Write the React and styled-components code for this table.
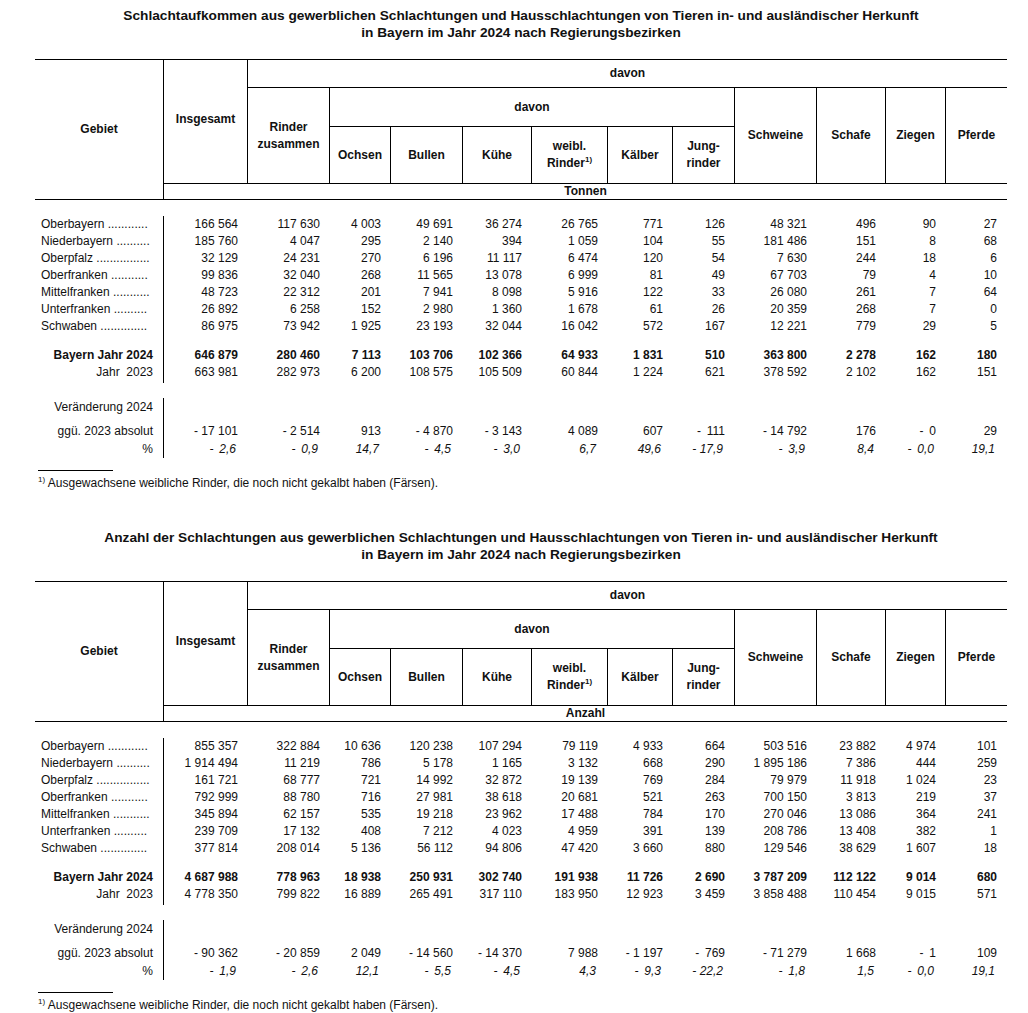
import React from "react";
import styled, { createGlobalStyle } from "styled-components";

const COLS = "129px 84px 82px 61px 72px 69px 76px 65px 62px 82px 69px 60px 61px";

const GlobalStyle = createGlobalStyle`
  html, body { margin: 0; padding: 0; background: #fff; overflow: hidden; }
  body {
    font-family: "Liberation Sans", Arial, sans-serif;
    color: #111;
    font-size: 12px;
  }
`;

const Page = styled.main`
  width: 972px;
  margin-left: 35px;
`;

const Section = styled.section`
  padding-top: 7px;
  margin-bottom: ${(p) => (p.$last ? 0 : 32)}px;
`;

const Title = styled.h2`
  margin: 0 0 18px;
  font-size: 13.7px;
  line-height: 17px;
  font-weight: 700;
  text-align: center;
`;

const HeadGrid = styled.div`
  display: grid;
  grid-template-columns: ${COLS};
  grid-template-rows: 28px 39px 57px 15px;
  border-top: 1px solid #000;
  border-bottom: 1px solid #000;
`;

const HeadCell = styled.div`
  grid-column: ${(p) => p.$col};
  grid-row: ${(p) => p.$row};
  display: flex;
  align-items: center;
  justify-content: center;
  text-align: center;
  font-weight: 700;
  font-size: 12px;
  line-height: 17px;
  padding-bottom: ${(p) => p.$pb || 0}px;
  border-right: ${(p) => (p.$br ? "1px solid #000" : "none")};
  border-bottom: ${(p) => (p.$bb ? "1px solid #000" : "none")};
`;

const Sup = styled.sup`
  font-size: 8px;
  line-height: 0;
  vertical-align: baseline;
  position: relative;
  top: -0.6em;
`;

const Row = styled.div`
  display: grid;
  grid-template-columns: ${COLS};
  height: ${(p) => p.$h}px;
  line-height: ${(p) => p.$h}px;
  font-weight: ${(p) => (p.$bold ? 700 : 400)};
`;

const Label = styled.div`
  border-right: ${(p) => (p.$line ? "1px solid #000" : "none")};
  text-align: ${(p) => (p.$right ? "right" : "left")};
  padding: ${(p) => (p.$right ? "0 10px 0 0" : "0 0 0 6px")};
  white-space: pre;
  overflow: hidden;
`;

const Num = styled.div`
  text-align: right;
  white-space: pre;
  padding-right: ${(p) => (p.$italic ? 12 : 10)}px;
  font-style: ${(p) => (p.$italic ? "italic" : "normal")};
`;

const FootRule = styled.div`
  width: 75px;
  margin: 12px 0 0 3px;
  border-top: 1px solid #000;
`;

const Footnote = styled.p`
  margin: 5px 0 0 3px;
  font-size: 12px;
  line-height: 14px;
`;

const S = "\u00a0";
const N = "-\u00a0";
const W = "-\u00a0\u2009";

const regions = [
  ["Oberbayern", 12],
  ["Niederbayern", 10],
  ["Oberpfalz", 16],
  ["Oberfranken", 11],
  ["Mittelfranken", 11],
  ["Unterfranken", 10],
  ["Schwaben", 14],
];

const fix = (s) => s.replace(/ /g, S);

const tables = [
  {
    title: [
      "Schlachtaufkommen aus gewerblichen Schlachtungen und Hausschlachtungen von Tieren in- und ausländischer Herkunft",
      "in Bayern im Jahr 2024 nach Regierungsbezirken",
    ],
    unit: "Tonnen",
    rows: [
      ["166 564", "117 630", "4 003", "49 691", "36 274", "26 765", "771", "126", "48 321", "496", "90", "27"],
      ["185 760", "4 047", "295", "2 140", "394", "1 059", "104", "55", "181 486", "151", "8", "68"],
      ["32 129", "24 231", "270", "6 196", "11 117", "6 474", "120", "54", "7 630", "244", "18", "6"],
      ["99 836", "32 040", "268", "11 565", "13 078", "6 999", "81", "49", "67 703", "79", "4", "10"],
      ["48 723", "22 312", "201", "7 941", "8 098", "5 916", "122", "33", "26 080", "261", "7", "64"],
      ["26 892", "6 258", "152", "2 980", "1 360", "1 678", "61", "26", "20 359", "268", "7", "0"],
      ["86 975", "73 942", "1 925", "23 193", "32 044", "16 042", "572", "167", "12 221", "779", "29", "5"],
    ],
    y2024: ["646 879", "280 460", "7 113", "103 706", "102 366", "64 933", "1 831", "510", "363 800", "2 278", "162", "180"],
    y2023: ["663 981", "282 973", "6 200", "108 575", "105 509", "60 844", "1 224", "621", "378 592", "2 102", "162", "151"],
    abs: [N + "17 101", N + "2 514", "913", N + "4 870", N + "3 143", "4 089", "607", W + "111", N + "14 792", "176", W + "0", "29"],
    pct: [W + "2,6", W + "0,9", "14,7", W + "4,5", W + "3,0", "6,7", "49,6", N + "17,9", W + "3,9", "8,4", W + "0,0", "19,1"],
  },
  {
    title: [
      "Anzahl der Schlachtungen aus gewerblichen Schlachtungen und Hausschlachtungen von Tieren in- und ausländischer Herkunft",
      "in Bayern im Jahr 2024 nach Regierungsbezirken",
    ],
    unit: "Anzahl",
    rows: [
      ["855 357", "322 884", "10 636", "120 238", "107 294", "79 119", "4 933", "664", "503 516", "23 882", "4 974", "101"],
      ["1 914 494", "11 219", "786", "5 178", "1 165", "3 132", "668", "290", "1 895 186", "7 386", "444", "259"],
      ["161 721", "68 777", "721", "14 992", "32 872", "19 139", "769", "284", "79 979", "11 918", "1 024", "23"],
      ["792 999", "88 780", "716", "27 981", "38 618", "20 681", "521", "263", "700 150", "3 813", "219", "37"],
      ["345 894", "62 157", "535", "19 218", "23 962", "17 488", "784", "170", "270 046", "13 086", "364", "241"],
      ["239 709", "17 132", "408", "7 212", "4 023", "4 959", "391", "139", "208 786", "13 408", "382", "1"],
      ["377 814", "208 014", "5 136", "56 112", "94 806", "47 420", "3 660", "880", "129 546", "38 629", "1 607", "18"],
    ],
    y2024: ["4 687 988", "778 963", "18 938", "250 931", "302 740", "191 938", "11 726", "2 690", "3 787 209", "112 122", "9 014", "680"],
    y2023: ["4 778 350", "799 822", "16 889", "265 491", "317 110", "183 950", "12 923", "3 459", "3 858 488", "110 454", "9 015", "571"],
    abs: [N + "90 362", N + "20 859", "2 049", N + "14 560", N + "14 370", "7 988", N + "1 197", W + "769", N + "71 279", "1 668", W + "1", "109"],
    pct: [W + "1,9", W + "2,6", "12,1", W + "5,5", W + "4,5", "4,3", W + "9,3", N + "22,2", W + "1,8", "1,5", W + "0,0", "19,1"],
  },
];

function Header({ unit }) {
  return (
    <HeadGrid>
      <HeadCell $col="1" $row="1 / 5" $br>Gebiet</HeadCell>
      <HeadCell $col="2" $row="1 / 4" $br $bb $pb={4}>Insgesamt</HeadCell>
      <HeadCell $col="3 / 14" $row="1" $bb>davon</HeadCell>
      <HeadCell $col="3" $row="2 / 4" $br $bb>Rinder<br />zusammen</HeadCell>
      <HeadCell $col="4 / 10" $row="2" $br $bb>davon</HeadCell>
      <HeadCell $col="4" $row="3" $br $bb>Ochsen</HeadCell>
      <HeadCell $col="5" $row="3" $br $bb>Bullen</HeadCell>
      <HeadCell $col="6" $row="3" $br $bb>Kühe</HeadCell>
      <HeadCell $col="7" $row="3" $br $bb>
        <span>weibl.<br />Rinder<Sup>1)</Sup></span>
      </HeadCell>
      <HeadCell $col="8" $row="3" $br $bb>Kälber</HeadCell>
      <HeadCell $col="9" $row="3" $br $bb>Jung-<br />rinder</HeadCell>
      <HeadCell $col="10" $row="2 / 4" $br $bb>Schweine</HeadCell>
      <HeadCell $col="11" $row="2 / 4" $br $bb>Schafe</HeadCell>
      <HeadCell $col="12" $row="2 / 4" $br $bb>Ziegen</HeadCell>
      <HeadCell $col="13" $row="2 / 4" $bb>Pferde</HeadCell>
      <HeadCell $col="2 / 14" $row="4">{unit}</HeadCell>
    </HeadGrid>
  );
}

function Nums({ values, italic }) {
  return values.map((v, i) => (
    <Num key={i} $italic={italic}>{fix(v)}</Num>
  ));
}

function DataTable({ t, last }) {
  return (
    <Section $last={last}>
      <Title>
        {t.title[0]}
        <br />
        {t.title[1]}
      </Title>
      <Header unit={t.unit} />
      <Row $h={16} />
      {regions.map(([name, dots], i) => (
        <Row key={name} $h={17}>
          <Label $line>{name + " " + ".".repeat(dots)}</Label>
          <Nums values={t.rows[i]} />
        </Row>
      ))}
      <Row $h={12}>
        <Label $line />
      </Row>
      <Row $h={17} $bold>
        <Label $line $right>Bayern Jahr 2024</Label>
        <Nums values={t.y2024} />
      </Row>
      <Row $h={17}>
        <Label $line $right>{"Jahr  2023"}</Label>
        <Nums values={t.y2023} />
      </Row>
      <Row $h={2}>
        <Label $line />
      </Row>
      <Row $h={15} />
      <Row $h={18}>
        <Label $line $right>Veränderung 2024</Label>
      </Row>
      <Row $h={6}>
        <Label $line />
      </Row>
      <Row $h={18}>
        <Label $line $right>ggü. 2023 absolut</Label>
        <Nums values={t.abs} />
      </Row>
      <Row $h={18}>
        <Label $line $right>%</Label>
        <Nums values={t.pct} italic />
      </Row>
      <FootRule />
      <Footnote>
        <Sup>1)</Sup> Ausgewachsene weibliche Rinder, die noch nicht gekalbt haben (Färsen).
      </Footnote>
    </Section>
  );
}

export default function App() {
  return (
    <>
      <GlobalStyle />
      <Page>
        {tables.map((t, i) => (
          <DataTable key={t.unit} t={t} last={i === tables.length - 1} />
        ))}
      </Page>
    </>
  );
}
